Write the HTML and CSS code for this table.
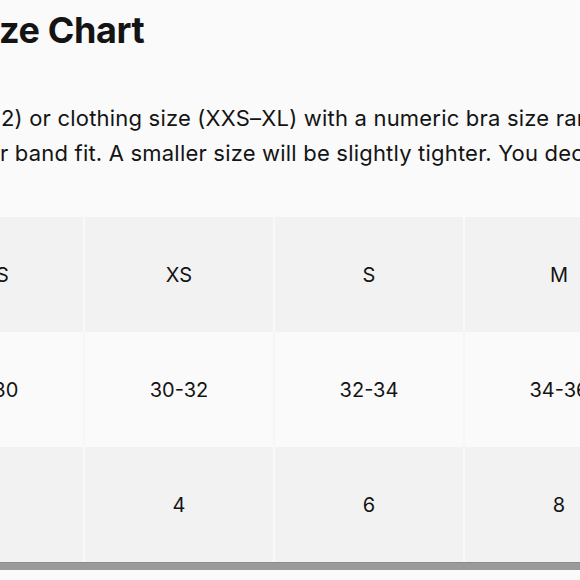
FILE: index.html
```html
<!DOCTYPE html>
<html lang="en">
<head>
<meta charset="utf-8">
<title>Size Chart</title>
<link rel="stylesheet" href="styles.css">
</head>
<body>
<main class="page">
  <h1 class="title">ze Chart</h1>
  <div class="intro">
    <div class="line">2) or clothing size (XXS–XL) with a numeric bra size range</div>
    <div class="line line-2">r band fit. A smaller size will be slightly tighter. You decide</div>
  </div>
  <div class="chart">
    <table class="sizes">
      <colgroup><col class="c"><col class="c"><col class="c"><col class="c"></colgroup>
      <thead>
        <tr class="row-shade"><th>XXS</th><th>XS</th><th>S</th><th>M</th></tr>
      </thead>
      <tbody>
        <tr class="row-plain"><td>28-30</td><td>30-32</td><td>32-34</td><td>34-36</td></tr>
        <tr class="row-shade"><td></td><td>4</td><td>6</td><td>8</td></tr>
      </tbody>
    </table>
    <div class="scrollbar"></div>
  </div>
</main>
</body>
</html>
```

FILE: styles.css
```css
html, body {
  margin: 0;
  padding: 0;
  background: #fafafa;
}

.page {
  width: 580px;
  height: 580px;
  overflow: hidden;
  color: #141414;
  font-family: Inter, "Noto Sans", sans-serif;
}

.title {
  margin: 8px 0 0 -1px;
  font-size: 36px;
  line-height: 44px;
  font-weight: 700;
  letter-spacing: -0.4px;
  white-space: nowrap;
}

.intro {
  margin-top: 49px;
  font-size: 22px;
  line-height: 35px;
  letter-spacing: 0.2px;
  white-space: nowrap;
}

.line {
  margin-left: 1px;
}

.line-2 {
  margin-left: 0;
}

.chart {
  margin-top: 46px;
  margin-left: -107px;
  width: 760px;
}

.sizes {
  border-collapse: separate;
  border-spacing: 0;
  table-layout: fixed;
  width: 760px;
}

.c {
  width: 190px;
}

.sizes th,
.sizes td {
  box-sizing: border-box;
  height: 115px;
  padding: 0;
  border-left: 2px solid #f9f9f9;
  text-align: center;
  vertical-align: middle;
  font-size: 20px;
  font-weight: 400;
  color: #141414;
}

.row-shade th,
.row-shade td {
  background: #f2f2f2;
}

.row-plain td {
  background: #fafafa;
  border-left-color: #f6f6f6;
}

.scrollbar {
  height: 7px;
  background: #9a9a9a;
  border-top: 1px solid #8c8c8c;
}
```
